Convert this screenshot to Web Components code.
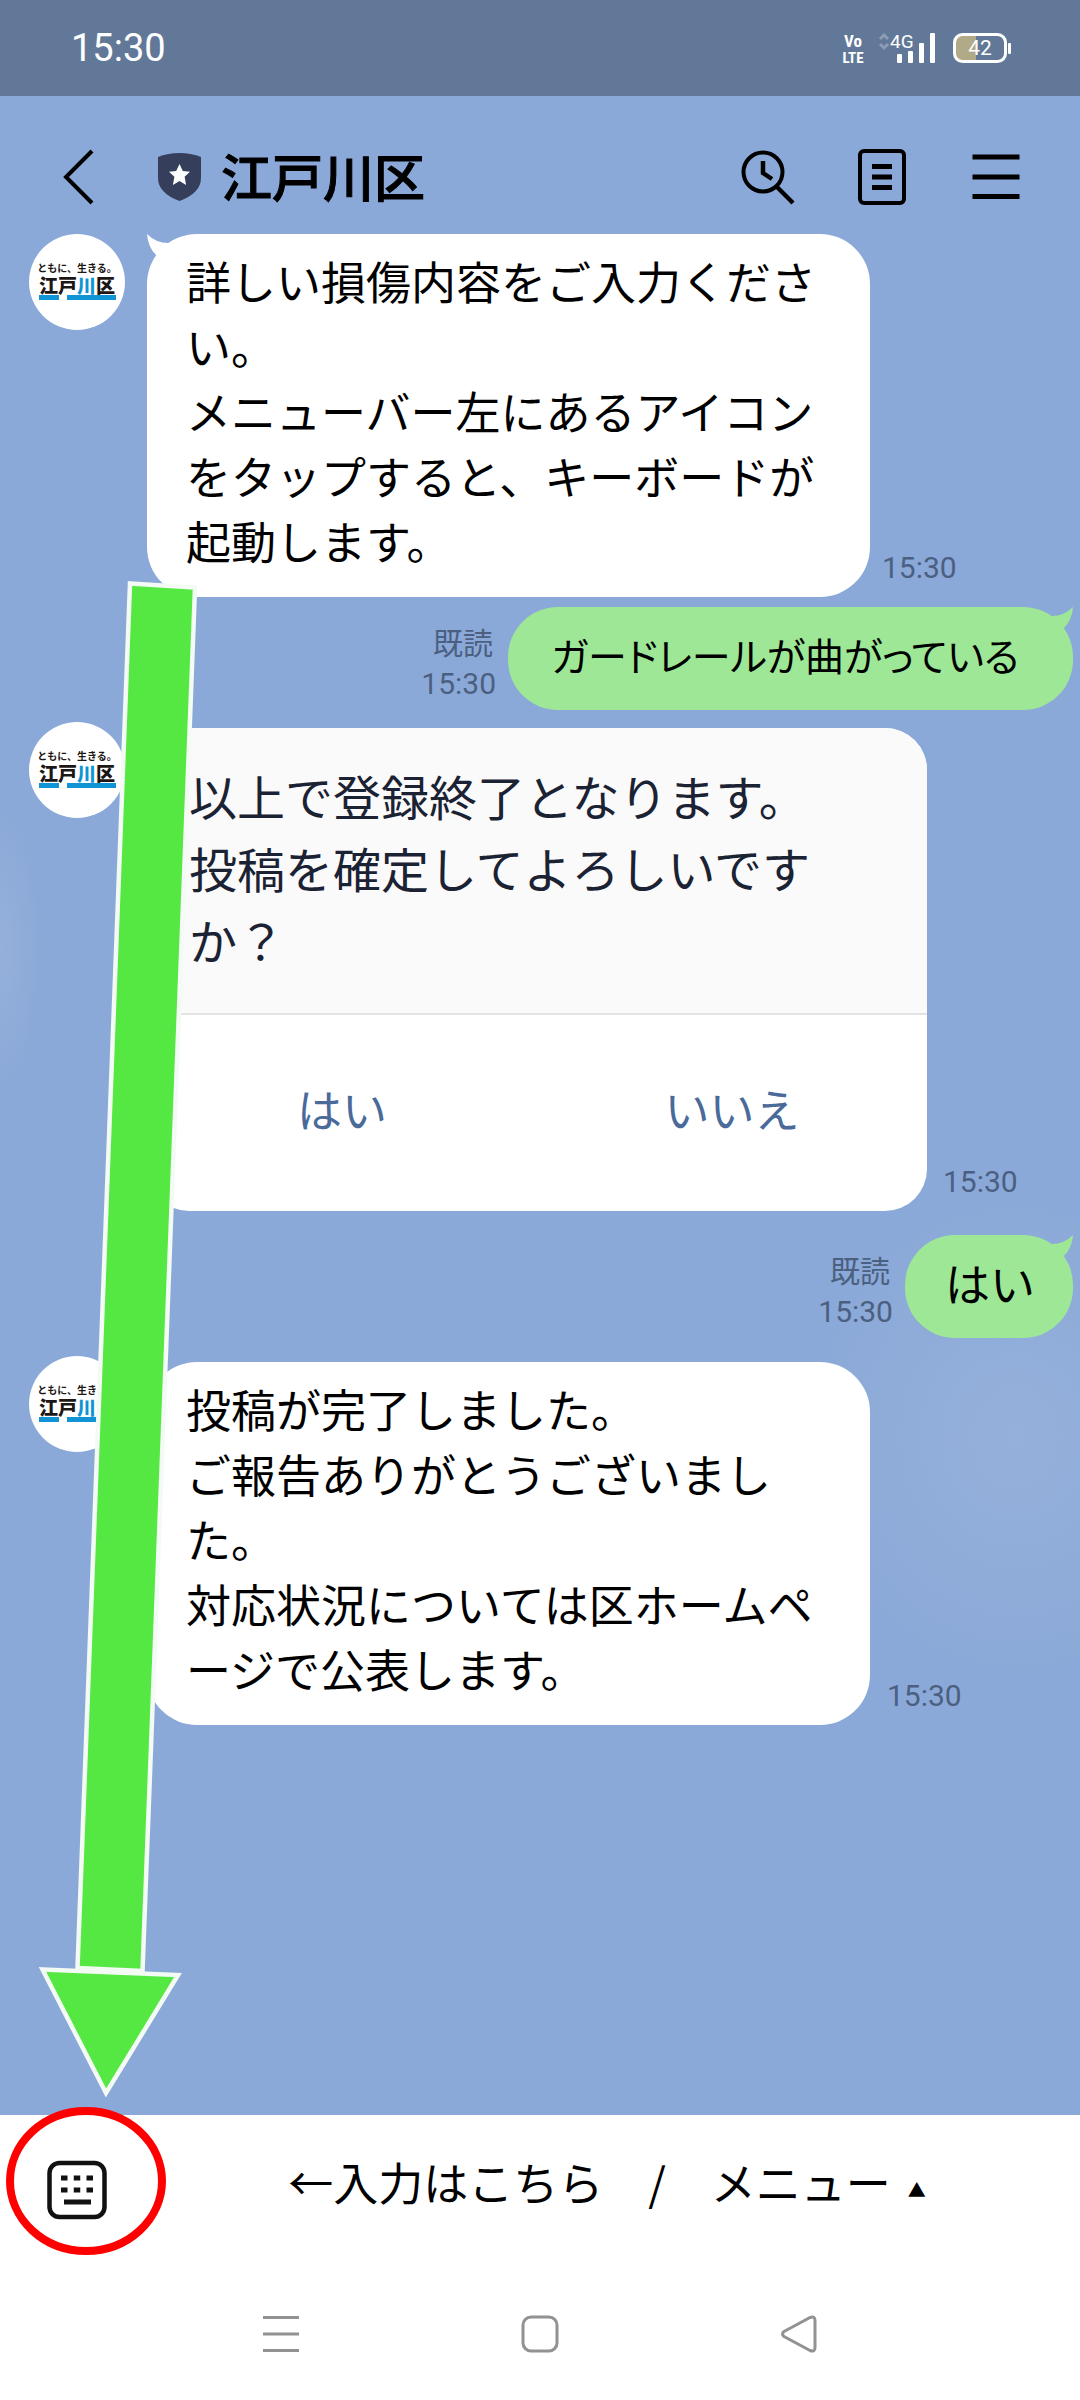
<!DOCTYPE html>
<html lang="ja">
<head>
<meta charset="utf-8">
<meta name="viewport" content="width=device-width, initial-scale=1">
<title>江戸川区</title>
<style>
  body { margin: 0; font-family: "Noto Sans CJK JP", Roboto, sans-serif; color: #000; background: #8ba9d8; }
</style>
</head>
<body>
<chat-screen>
  <status-bar slot="top"></status-bar>
  <chat-header slot="top">江戸川区</chat-header>

  <chat-in time="15:30" tail style="--time-gap:12px;--drop:0px">詳しい損傷内容をご入力ください。<br>メニューバー左にあるアイコンをタップすると、キーボードが起動します。</chat-in>
  <chat-out time="15:30" class="g10"><span class="snug">ガードレールが曲がっている</span></chat-out>
  <chat-confirm time="15:30" class="g12">以上で登録終了となります。<br>投稿を確定してよろしいですか？</chat-confirm>
  <chat-out time="15:30" class="g24">はい</chat-out>
  <chat-in time="15:30" class="g18">投稿が完了しました。<br>ご報告ありがとうございました。<br>対応状況については区ホームページで公表します。</chat-in>

  <menu-bar slot="bottom">←入力はこちら　/　メニュー</menu-bar>
  <system-nav slot="bottom"></system-nav>
  <guide-arrow slot="bottom"></guide-arrow>
</chat-screen>

<script>
const make = (name, html) => customElements.define(name, class extends HTMLElement {
  constructor() {
    super();
    this.attachShadow({ mode: 'open' }).innerHTML = html;
  }
  connectedCallback() {
    const t = this.shadowRoot.querySelector('time');
    if (t && this.hasAttribute('time')) t.textContent = this.getAttribute('time');
  }
});

const base = `
  :host, * { box-sizing: border-box; }
  button { appearance: none; border: 0; padding: 0; background: none; font: inherit; color: inherit; }
  svg { display: block; }
  time, .read { font: 30px/40px Roboto, "Noto Sans CJK JP", sans-serif; color: #4b6081; }
`;

make('chat-screen', `<style>${base}
  :host { position: relative; display: flex; flex-direction: column; min-height: 100vh; overflow: hidden; }
  main { flex: 1; display: flex; flex-direction: column;
    background:
      radial-gradient(ellipse 210px 240px at 94% 64%, #95b0da 0, #95b0da00 100%),
      radial-gradient(ellipse 40px 140px at 0 38%, #95b0da 0, #95b0da00 100%),
      #8ba9d8; }
  ::slotted(.g10) { margin-top: 10px; }
  ::slotted(.g12) { margin-top: 12px; }
  ::slotted(.g18) { margin-top: 18px; }
  ::slotted(.g24) { margin-top: 24px; }
</style>
<slot name="top"></slot><main><slot></slot></main><slot name="bottom"></slot>`);

make('status-bar', `<style>${base}
  :host { display: flex; justify-content: space-between; align-items: center; height: 96px; padding: 0 68px 0 71px; background: #627898; color: #fff; font: 38px/48px Roboto, sans-serif; }
</style>
<span>15:30</span>
<svg width="178" height="42" viewBox="834 27 178 42" fill="#fff" role="img" aria-label="VoLTE 4G 42%">
  <g font-family="'Liberation Sans Narrow', 'Roboto Condensed', Roboto, sans-serif" font-weight="700" text-anchor="middle">
    <text x="853" y="47" font-size="17">Vo</text>
    <text x="853" y="63" font-size="15">LTE</text>
  </g>
  <path d="M880 39l4-4 4 4M880 44l4 4 4-4" fill="none" stroke="#8c9cb4" stroke-width="3"/>
  <text x="890" y="48" font-family="Roboto, sans-serif" font-size="19">4G</text>
  <rect x="897" y="54" width="5" height="9" rx="1"/><rect x="908" y="51" width="5" height="12" rx="1"/>
  <rect x="919" y="43" width="5" height="20" rx="1"/><rect x="930" y="33" width="5" height="30" rx="1"/>
  <path d="M976 35h-14q-7 0-7 7v12q0 7 7 7h14z" fill="#b1aa86"/>
  <rect x="954.5" y="34.500" width="51" height="27" rx="8" fill="none" stroke="#fff" stroke-width="3"/>
  <rect x="1008" y="43" width="3" height="11" rx="1"/>
  <text x="980" y="55" font-family="Roboto, sans-serif" font-size="21" text-anchor="middle">42</text>
</svg>`);

make('chat-header', `<style>${base}
  :host { display: flex; align-items: center; height: 138px; padding: 24px 57px 0 62px; background: #8ba9d8; }
  h1 { display: flex; align-items: center; gap: 20px; margin: 0 auto 0 64px; font-size: 51px; line-height: 60px; font-weight: 500; }
  .name { padding-bottom: 4px; -webkit-text-stroke: 1px #000; }
  nav { display: flex; gap: 60px; }
  svg { fill: none; stroke: #000; stroke-width: 4; }
</style>
<button aria-label="戻る"><svg width="32" height="56" viewBox="0 0 32 56"><path d="M30 2L4 28l26 26"/></svg></button>
<h1><svg width="43" height="48" viewBox="0 0 43 48" stroke="none"><path stroke="none" fill="#353f5c" d="M0 4Q10 0 21.500 0T43 4v21Q43 40 21.500 48 0 40 0 25z"/><path stroke="none" fill="#fff" d="M21.500 11l3.300 7 7.200.8-5.400 5 1.500 8.200-6.600-4-6.600 4 1.500-8.200-5.400-5 7.200-.8z"/></svg><span class="name"><slot></slot></span></h1>
<nav>
  <button aria-label="検索"><svg width="54" height="56" viewBox="0 0 54 56"><circle cx="22" cy="23" r="19.500"/><path d="M22 12v12l9 6" stroke-width="4.500"/><path d="M36 38l16 16" stroke-width="4.500"/></svg></button>
  <button aria-label="ノート"><svg width="54" height="56" viewBox="0 0 54 56"><rect x="5" y="2" width="44" height="52" rx="4"/><path d="M17 17.500h20M17 28h20M17 38.500h20" stroke-width="5"/></svg></button>
  <button aria-label="メニュー"><svg width="54" height="56" viewBox="0 0 54 56"><path d="M3.500 8h47M3.500 28h47M3.500 47.500h47" stroke-width="5"/></svg></button>
</nav>`);

make('ward-avatar', `<style>${base}
  :host { display: flex; flex-direction: column; align-items: center; flex: none; width: 96px; height: 96px; padding-top: 27px; border-radius: 50%; background: #fff; color: #1c1614; overflow: hidden; }
  small { font-size: 10px; line-height: 14px; font-weight: 700; white-space: nowrap; }
  b { font-size: 19px; line-height: 20px; font-weight: 900; white-space: nowrap; }
  i { font-style: normal; color: #1094d6; }
  div { display: flex; gap: 8px; width: 77px; height: 5px; }
  div::before, div::after { content: ""; background: #1094d6; flex: 20; }
  div::after { flex: 48; }
</style>
<small>ともに、生きる。</small><b>江戸<i>川</i>区</b><div></div>`);

make('chat-in', `<style>${base}
  :host { display: flex; align-items: flex-start; padding-left: 29px; }
  .row { display: flex; align-items: flex-end; gap: var(--time-gap, 17px); margin: var(--drop, 6px) 0 0 22px; }
  .bubble { position: relative; width: 723px; min-height: 103px; padding: 14px 44px 24px 39px; border-radius: 50px; background: #fff; font-size: 45px; line-height: 65px; line-break: normal; }
  .tail { position: absolute; left: 0; top: 0; fill: #fff; display: none; }
  :host([tail]) .tail { display: block; }
  time { margin-bottom: 9px; }
</style>
<ward-avatar></ward-avatar>
<div class="row"><div class="bubble"><svg class="tail" width="40" height="40" viewBox="0 0 40 40"><path d="M0 0Q9 9 21 9L40 12V40H12L9 21Q1 13 0 0z"/></svg><slot></slot></div><time></time></div>`);

make('chat-out', `<style>${base}
  :host { display: flex; justify-content: flex-end; align-items: flex-end; gap: 12px; padding-right: 7px; }
  .meta { display: flex; flex-direction: column; align-items: flex-end; padding-bottom: 6px; }
  .read { padding-right: 3px; }
  .bubble { position: relative; padding: 15px 38px 23px 40px; border-radius: 50px; background: #9ee796; font-size: 45px; line-height: 65px; }
  ::slotted(.snug) { display: block; font-size: 39px; font-feature-settings: "palt"; padding: 0 16px 0 3px; }
  .tail { position: absolute; right: 0; top: 0; fill: #9ee796; }
</style>
<div class="meta"><span class="read">既読</span><time></time></div>
<div class="bubble"><svg class="tail" width="40" height="40" viewBox="0 0 40 40"><path d="M40 0Q31 9 19 9L0 12V40H28L31 21Q39 13 40 0z"/></svg><slot></slot></div>`);

make('chat-confirm', `<style>${base}
  :host { display: flex; align-items: flex-start; padding-left: 29px; }
  .row { display: flex; align-items: flex-end; gap: 16px; margin: 6px 0 0 22px; }
  .card { width: 780px; border-radius: 42px; background: #fff; overflow: hidden; }
  .text { padding: 31px 42px 38px; background: #fafafa; border-bottom: 2px solid #e3e3e3; color: #1a2233; font-size: 48px; line-height: 72px; }
  .actions { display: grid; grid-template-columns: 1fr 1fr; height: 196px; }
  .actions button { padding-bottom: 10px; color: #4a6a9a; font-size: 45px; line-height: 65px; }
  time { margin-bottom: 9px; }
</style>
<ward-avatar></ward-avatar>
<div class="row"><div class="card"><div class="text"><slot></slot></div><div class="actions"><button>はい</button><button>いいえ</button></div></div><time></time></div>`);

make('menu-bar', `<style>${base}
  :host { display: flex; height: 133px; background: #fff; }
  .kb { position: relative; display: flex; align-items: flex-start; width: 134px; padding: 45px 0 0 47px; }
  .ring { position: absolute; left: 6px; top: -9px; }
  .label { flex: 1; font-size: 45px; line-height: 65px; white-space: pre; }
  .up { padding-left: 17px; font-size: 18px; line-height: 18px; vertical-align: 4px; }
</style>
<button class="kb" aria-label="キーボード">
  <svg width="60" height="60" viewBox="0 0 60 60"><rect x="2.500" y="3" width="55" height="54" rx="10" fill="none" stroke="#111" stroke-width="4.500"/><path d="M14 18h32M14 30h32" stroke="#111" stroke-width="5" stroke-dasharray="6.500 6.250"/><path d="M17 42h27" stroke="#111" stroke-width="5"/></svg>
  <svg class="ring" width="160" height="150" viewBox="0 0 160 150"><ellipse cx="80" cy="75" rx="76" ry="70" fill="none" stroke="#fe0000" stroke-width="8"/></svg>
</button>
<button class="label"><slot></slot><span class="up">▲</span></button>`);

make('system-nav', `<style>${base}
  :host { display: grid; grid-template-columns: repeat(3, 1fr); justify-items: center; align-items: center; height: 152px; padding: 20px 14% 0; background: #fff; }
  svg { fill: none; stroke: #929292; stroke-width: 3; stroke-linejoin: round; }
</style>
<button aria-label="履歴"><svg width="36" height="38" viewBox="0 0 36 38"><path d="M0 2.500h36M0 19h36M0 35.500h36"/></svg></button>
<button aria-label="ホーム"><svg width="38" height="38" viewBox="0 0 38 38"><rect x="2" y="2" width="34" height="34" rx="8"/></svg></button>
<button aria-label="戻る"><svg width="36" height="38" viewBox="0 0 36 38"><path d="M3 16.500L29 2.500q5-2 5 3v27q0 5-5 3L3 21.500q-3-2.500 0-5z"/></svg></button>`);

make('guide-arrow', `<style>${base}
  :host { position: absolute; left: 36px; top: 578px; pointer-events: none; }
  svg { fill: #55e843; stroke: #f4fbf5; stroke-width: 4.500; }
</style>
<svg width="166" height="1524" viewBox="36 578 166 1524" aria-hidden="true">
  <path d="M130 583.500L195 587.500 142.500 1971 77.500 1968z"/>
  <path d="M42.500 1969.500L178 1975 106 2093z"/>
</svg>`);
</script>
</body>
</html>
